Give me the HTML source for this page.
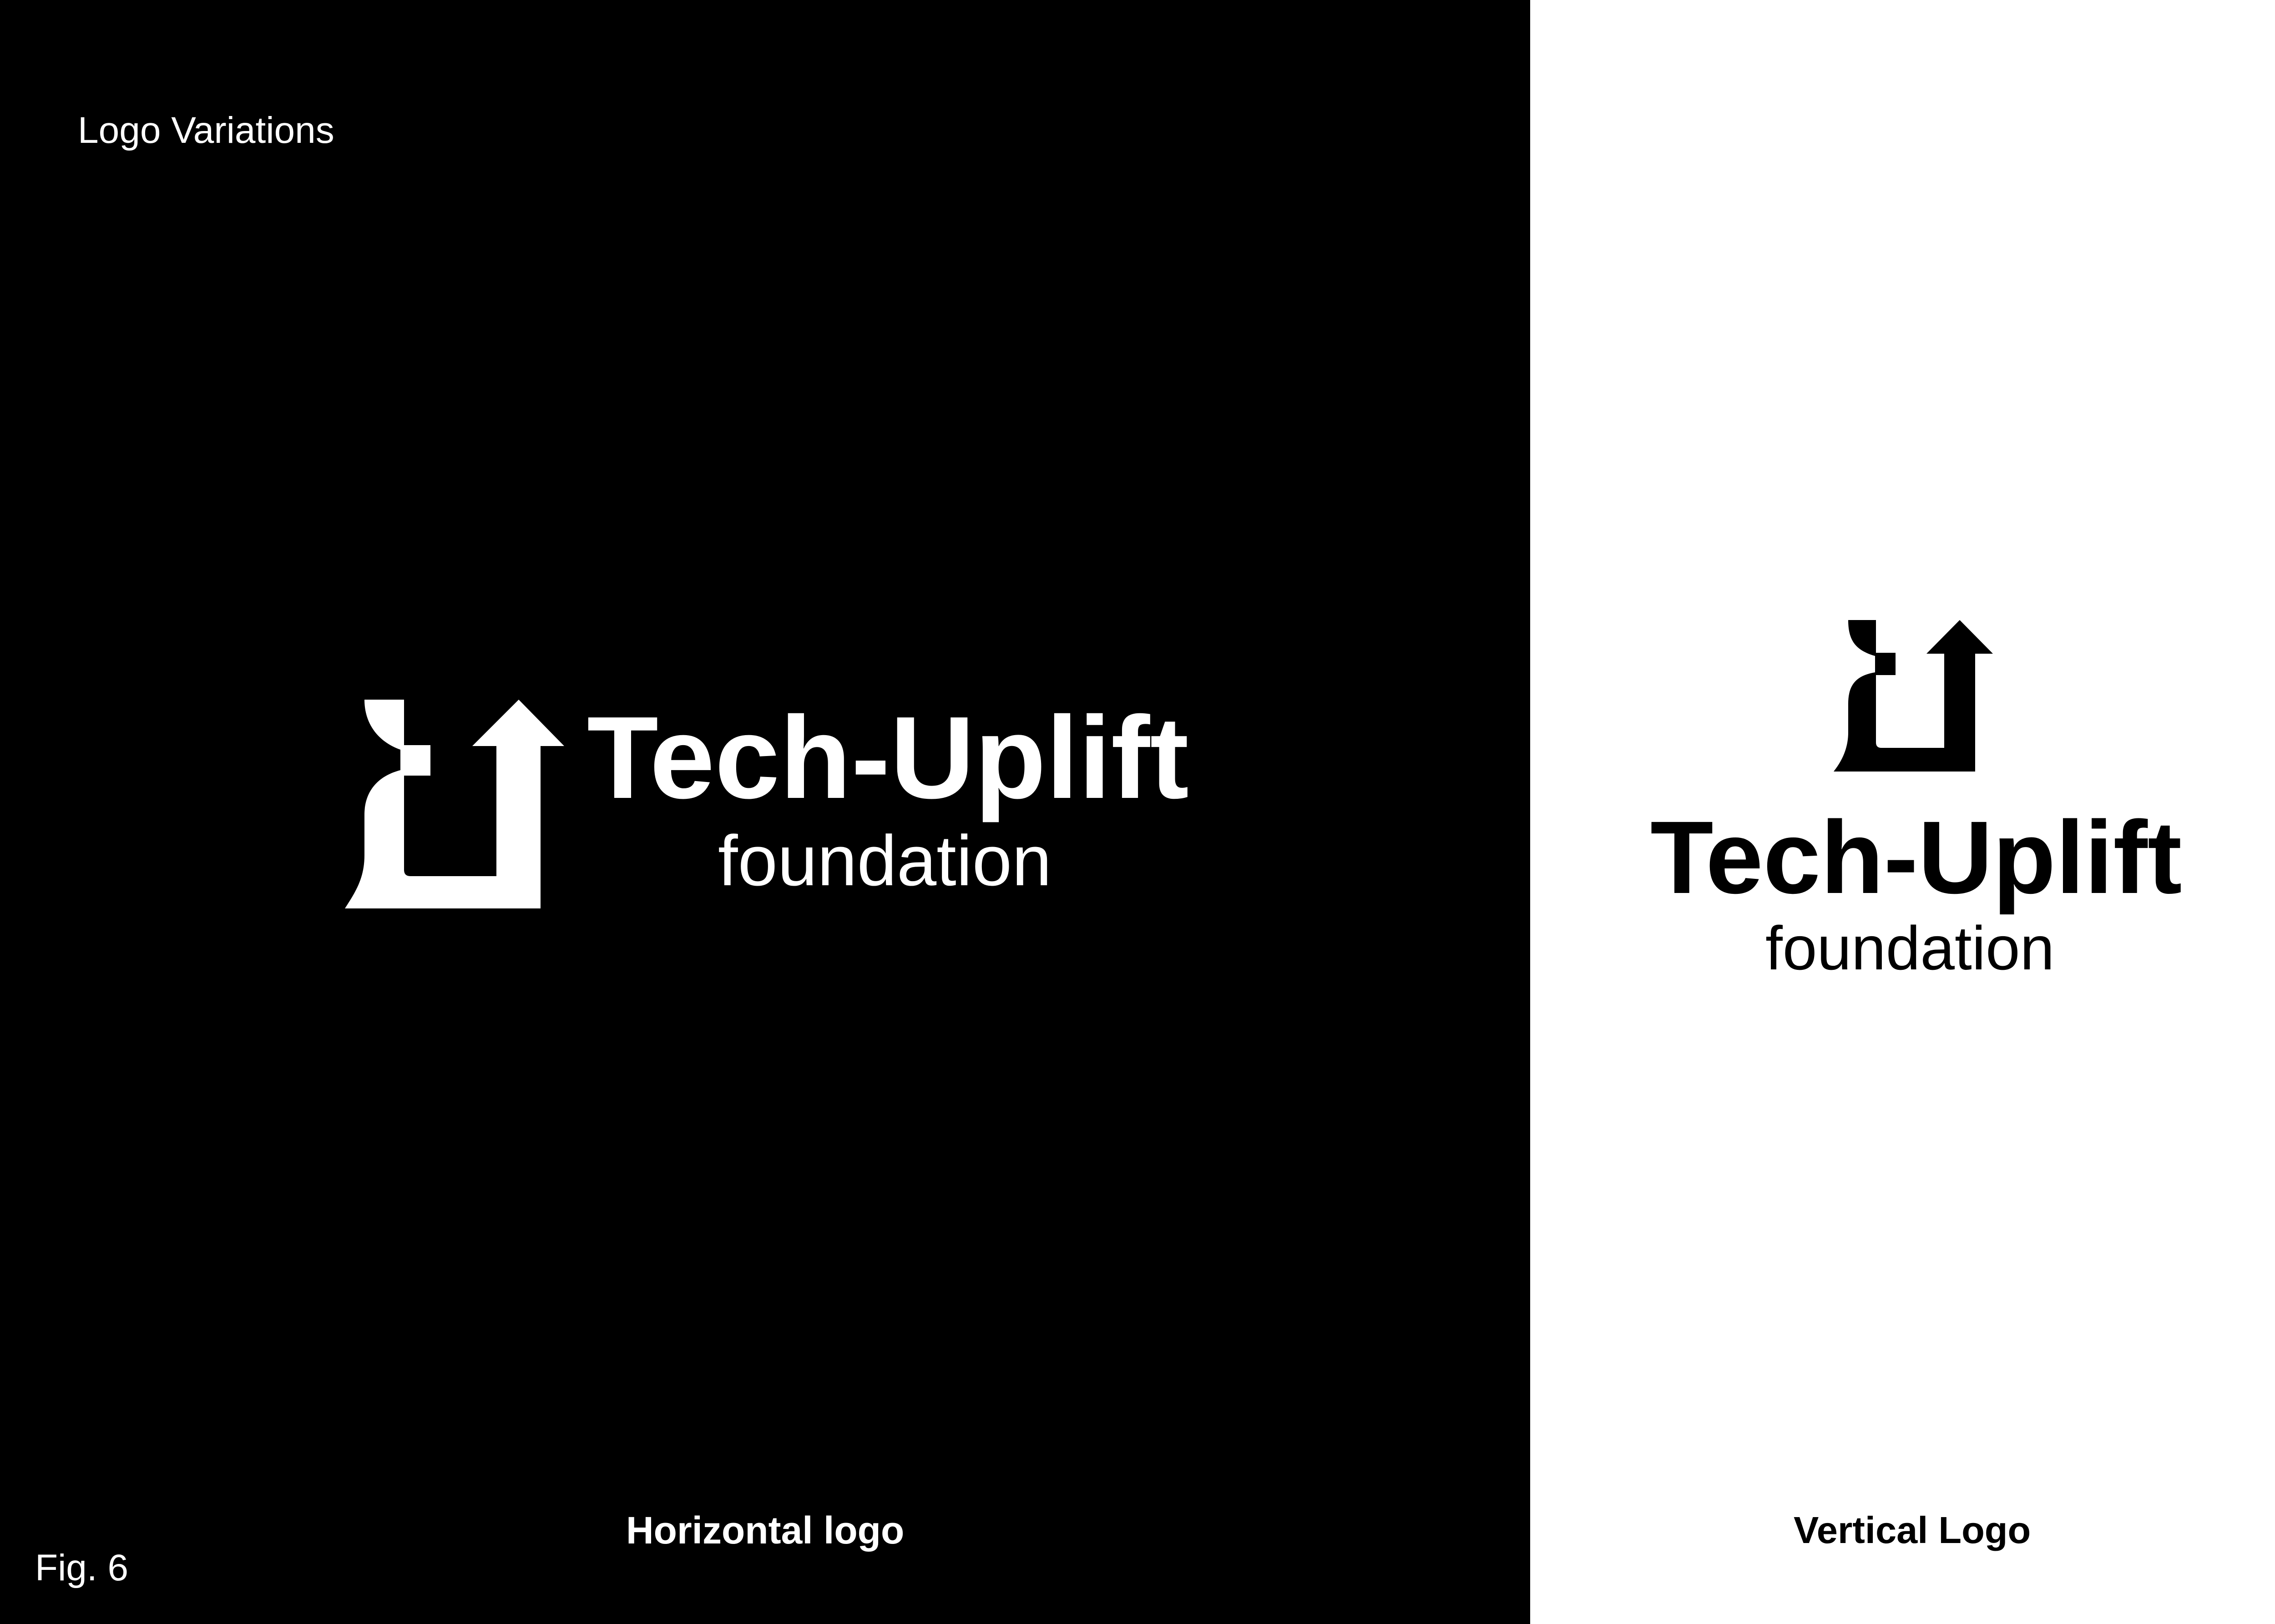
<!DOCTYPE html>
<html><head><meta charset="utf-8"><style>
html,body{margin:0;padding:0}
body{width:5046px;height:3570px;position:relative;overflow:hidden;background:#fff;font-family:"Liberation Sans",Arial,sans-serif}
#blk{position:absolute;left:0;top:0;width:3363px;height:3570px;background:#000}
.t{position:absolute;white-space:nowrap;line-height:1}
</style></head><body>
<div id="blk"></div>
<svg width="5046" height="3570" style="position:absolute;left:0;top:0">
<path fill="#fff" d="M801 1538 L888 1538 L888 1638 L946 1638 L946 1705 L888 1705 L888 1912 Q888 1926 902 1926 L1091 1926 L1091 1640 L1038 1640 L1140 1538 L1240 1640 L1188 1640 L1188 1997 L758 1997 C782 1960 801 1930 801 1880 L801 1791 C801 1740 830 1706 880 1693 L880 1648 C830 1630 801 1590 801 1538 Z"/>
<path fill="#000" d="M4062 1363 L4123 1363 L4123 1435 L4166 1435 L4166 1484 L4123 1484 L4123 1632 Q4123 1644 4135 1644 L4273 1644 L4273 1437 L4234 1437 L4307 1363 L4380 1437 L4341 1437 L4341 1696 L4030 1696 C4052 1668 4062 1640 4062 1610 L4062 1547 C4062 1505 4080 1485 4121 1478 L4121 1442 C4080 1430 4062 1410 4062 1363 Z"/>
</svg>
<div class="t" style="left:171px;top:246px;font-size:82px;color:#fff">Logo Variations</div>
<div class="t" style="left:77px;top:3406px;font-size:82px;color:#fff">Fig. 6</div>
<div class="t" style="left:1376px;top:3322px;font-size:84px;font-weight:bold;color:#fff">Horizontal logo</div>
<div class="t" style="left:3942px;top:3322px;font-size:83px;font-weight:bold;color:#000">Vertical Logo</div>
<div class="t" style="left:1290px;top:1537px;font-size:257px;font-weight:bold;color:#fff;letter-spacing:0px">Tech-Uplift</div>
<div class="t" style="left:1578px;top:1814px;font-size:157px;color:#fff">foundation</div>
<div class="t" style="left:3627px;top:1772px;font-size:227px;font-weight:bold;color:#000;letter-spacing:0px">Tech-Uplift</div>
<div class="t" style="left:3880px;top:2016px;font-size:136px;color:#000">foundation</div>
</body></html>
